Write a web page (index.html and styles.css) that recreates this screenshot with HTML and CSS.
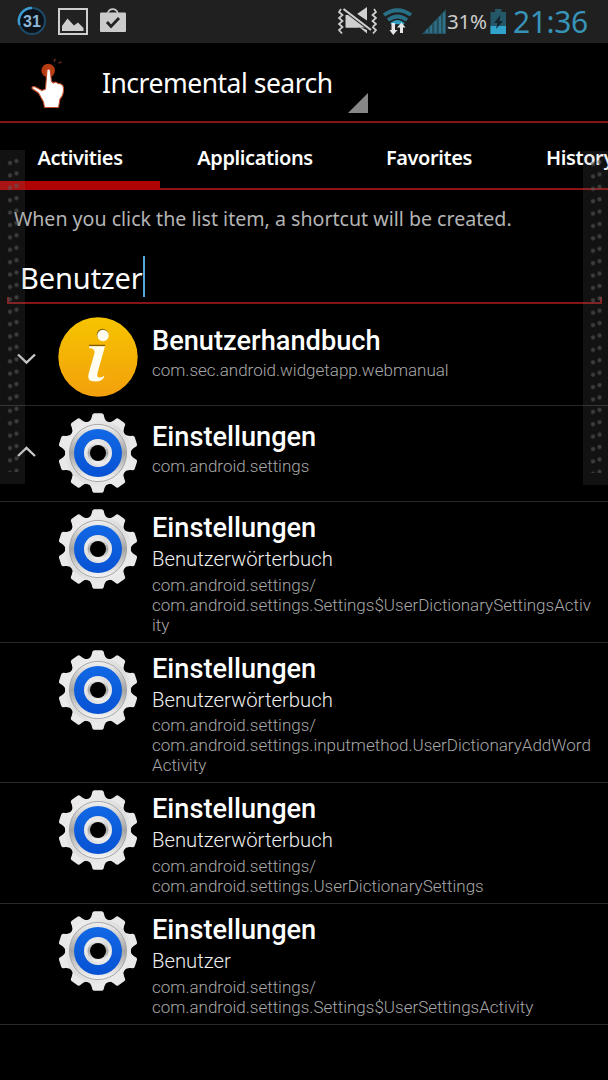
FILE: index.html
```html
<!DOCTYPE html>
<html lang="en">

<head>
    <meta charset="UTF-8">
    <meta name="viewport" content="width=device-width, initial-scale=1.0">
    <link rel="stylesheet" href="styles.css">
    <title>Incremental search</title>
</head>

<body>
    <!-- shared icons -->
    <svg class="defs" width="0" height="0">
        <defs>
            <linearGradient id="metal" x1="0" y1="0" x2="1" y2="1">
                <stop offset="0" stop-color="#f4f4f4" />
                <stop offset="0.5" stop-color="#dcdcdc" />
                <stop offset="1" stop-color="#f2f2f2" />
            </linearGradient>
            <linearGradient id="ring" x1="0" y1="0" x2="0" y2="1">
                <stop offset="0" stop-color="#f2f2f2" />
                <stop offset="0.5" stop-color="#a4a4a4" />
                <stop offset="1" stop-color="#f8f8f8" />
            </linearGradient>
            <linearGradient id="blue" x1="0" y1="0" x2="0" y2="1">
                <stop offset="0" stop-color="#1268e4" />
                <stop offset="1" stop-color="#0752d4" />
            </linearGradient>
            <linearGradient id="yellow" x1="0" y1="0" x2="0" y2="1">
                <stop offset="0" stop-color="#f6c400" />
                <stop offset="1" stop-color="#f3a00c" />
            </linearGradient>
            <path id="tooth" d="M-11 -30 Q-7.2 -32 -6.2 -36 L-5.700 -38.3 Q-5.2 -39.8 -3.500 -39.8 H3.500 Q5.2 -39.8 5.700 -38.3 L6.2 -36 Q7.2 -32 11 -30 Z" />
            <symbol id="gear" viewBox="-40 -40 80 80">
                <g fill="#e9e9e9">
                    <use href="#tooth" />
                    <use href="#tooth" transform="rotate(36)" />
                    <use href="#tooth" transform="rotate(72)" />
                    <use href="#tooth" transform="rotate(108)" />
                    <use href="#tooth" transform="rotate(144)" />
                    <use href="#tooth" transform="rotate(180)" />
                    <use href="#tooth" transform="rotate(216)" />
                    <use href="#tooth" transform="rotate(252)" />
                    <use href="#tooth" transform="rotate(288)" />
                    <use href="#tooth" transform="rotate(324)" />
                </g>
                <circle r="33" fill="url(#metal)" />
                <circle r="28.6" fill="url(#ring)" stroke="#a2a2a2" stroke-width="0.9" />
                <circle r="24" fill="url(#blue)" />
                <circle r="14" fill="url(#metal)" />
                <circle r="10.500" fill="url(#ring)" />
                <circle r="8" fill="#000" />
            </symbol>
        </defs>
    </svg>

    <header class="status">
        <svg class="status-left" width="130" height="43" viewBox="0 0 130 43">
            <circle cx="32" cy="21" r="13" fill="#0c1218" stroke="#1d4a68" stroke-width="2" />
            <path d="M19.500 25A13 13 0 0 1 32 8" fill="none" stroke="#3c9bd2" stroke-width="2.400" />
            <text class="badge" x="32" y="26.500">31</text>
            <rect x="59" y="9" width="28" height="25" fill="#222" stroke="#cfcfcf" stroke-width="2" />
            <path d="M62 31V26L67.500 18.500L74 25.500L78 22.500L83.500 28V31Z" fill="#cfcfcf" />
            <path d="M108 14V12.500A5 5 0 0 1 117.500 12.500V14" fill="none" stroke="#c8c8c8" stroke-width="1.700" />
            <rect x="100" y="12.500" width="26" height="19.500" rx="1" fill="#cbcbcb" />
            <path d="M107 22L111 26.500L119 18" fill="none" stroke="#222" stroke-width="2.800" />
        </svg>
        <div class="status-right">
            <svg width="110" height="43" viewBox="336 0 110 43">
                <path d="M341 9L339 12L342.500 15L339 18L342.500 21L339 24L342.500 27L339 30L342 33.500M374 9L376 12L372.500 15L376 18L372.500 21L376 24L372.500 27L376 30L373 33.500" fill="none" stroke="#cfcfcf" stroke-width="1.700" />
                <path d="M345.500 15H350L366 27.500H345.500ZM367 7V20.500L357 14Z" fill="#cfcfcf" />
                <path d="M344 8L371 28.500" stroke="#202020" stroke-width="6" />
                <path d="M343.500 9L371 30" stroke="#cfcfcf" stroke-width="2.200" />
                <path d="M346 17.500V27.500H359ZM358 26L367 33.500V30Z" fill="#cfcfcf" />
                <g fill="none" stroke="#286f88" stroke-width="3.800">
                    <path d="M384 15Q397.500 5.500 411 15" />
                    <path d="M388 20Q397.500 13 407 20" />
                    <path d="M391.500 24.500Q397.500 19.500 403.500 24.500" stroke="#2d9cbd" />
                </g>
                <path d="M391.500 23H395V30H397.500L393.200 35L389.500 30H391.500ZM400 33V27.500H397L401.500 22.500L405.500 27.500H403V33Z" fill="#e6e6e6" />
                <path d="M422 34L446 9V34Z" fill="#25515f" />
                <path d="M427 33V29.500M431 33V25.500M435.500 33V21M440 33V16.500M444 33V12.500" stroke="#2f7189" stroke-width="2" />
            </svg>
            <span class="percent">31%</span>
            <svg width="18" height="43" viewBox="489 0 18 43">
                <path d="M495 9H501.500V12H506V34H490.500V12H495Z" fill="#245768" />
                <rect x="490.500" y="26" width="15.500" height="8" fill="#31a4cb" />
                <path d="M500.500 15L494 23H497.500L496 29L503 21H499.500Z" fill="#15242a" />
            </svg>
            <span class="clock">21:36</span>
        </div>
    </header>

    <div class="action-bar">
        <svg class="logo" width="40" height="56" viewBox="28 56 40 56">
            <circle cx="48.200" cy="70.500" r="6.800" fill="#b63c12" />
            <path d="M54.500 63L53.500 59.500L56 58.500ZM57 63.500L61 61L61.500 63Z" fill="#6e2c20" />
            <path d="M47 70Q48.500 68 50.200 70L51.500 81.500L53.500 83Q55.500 81 58 83.500Q63 83.500 63.500 88Q64 95 60 99L58.500 107.500H44.500L43.500 102L38.500 93L32 88.500Q31.500 86 35 86.800L42 90.500L45.500 89Z" fill="#fff" stroke="#c44b28" stroke-width="1.100" stroke-linejoin="round" />
        </svg>
        <h1>Incremental search</h1>
        <svg class="corner" width="20" height="20" viewBox="0 0 20 20">
            <path d="M20 0V20H0Z" fill="#878787" />
        </svg>
    </div>

    <nav class="tabs">
        <span class="tab active">Activities</span>
        <span class="tab apps">Applications</span>
        <span class="tab favs">Favorites</span>
        <span class="tab history">History</span>
    </nav>

    <p class="hint">When you click the list item, a shortcut will be created.</p>

    <div class="search">
        <span class="query">Benutzer</span><span class="caret"></span>
    </div>

    <main class="list">
        <div class="row group">
            <svg class="chevron down" width="20" height="12" viewBox="0 0 20 12">
                <path d="M1 1.500L9.500 9.500L18 1.500" />
            </svg>
            <svg class="icon" width="80" height="80" viewBox="0 0 80 80">
                <circle cx="40" cy="40" r="39.700" fill="url(#yellow)" />
                <circle cx="44.500" cy="17.500" r="5.800" fill="#835c00" />
                <circle cx="45" cy="18.500" r="5.700" fill="#fffdf0" />
                <path d="M31 28.500H47" stroke="#835c00" stroke-width="1.500" />
                <path d="M31 29.200H47L39.500 56Q38.500 61 42 60.500Q45 60 46.500 58.500Q45.500 64.500 37 64.500Q28.500 64.500 30.500 57L36.500 36Q37.500 31.500 31 31Z" fill="#fffdf0" />
            </svg>
            <div class="text">
                <h2>Benutzerhandbuch</h2>
                <p class="package">com.sec.android.widgetapp.webmanual</p>
            </div>
        </div>
        <div class="row group">
            <svg class="chevron" width="20" height="12" viewBox="0 0 20 12">
                <path d="M1 10L9.500 2L18 10" />
            </svg>
            <svg class="icon" width="80" height="80"><use href="#gear" /></svg>
            <div class="text">
                <h2>Einstellungen</h2>
                <p class="package">com.android.settings</p>
            </div>
        </div>
        <div class="row child">
            <svg class="icon" width="80" height="80"><use href="#gear" /></svg>
            <div class="text">
                <h2>Einstellungen</h2>
                <p class="label">Benutzerwörterbuch</p>
                <p class="package">com.android.settings/<br>com.android.settings.Settings$UserDictionarySettingsActiv<br>ity</p>
            </div>
        </div>
        <div class="row child">
            <svg class="icon" width="80" height="80"><use href="#gear" /></svg>
            <div class="text">
                <h2>Einstellungen</h2>
                <p class="label">Benutzerwörterbuch</p>
                <p class="package">com.android.settings/<br>com.android.settings.inputmethod.UserDictionaryAddWord<br>Activity</p>
            </div>
        </div>
        <div class="row child">
            <svg class="icon" width="80" height="80"><use href="#gear" /></svg>
            <div class="text">
                <h2>Einstellungen</h2>
                <p class="label">Benutzerwörterbuch</p>
                <p class="package">com.android.settings/<br>com.android.settings.UserDictionarySettings</p>
            </div>
        </div>
        <div class="row child">
            <svg class="icon" width="80" height="80"><use href="#gear" /></svg>
            <div class="text">
                <h2>Einstellungen</h2>
                <p class="label">Benutzer</p>
                <p class="package">com.android.settings/<br>com.android.settings.Settings$UserSettingsActivity</p>
            </div>
        </div>
    </main>

    <!-- edge handles floating over the list -->
    <div class="edge left"><div class="grip"></div></div>
    <div class="edge right"><div class="grip"></div></div>
</body>

</html>
```
FILE: styles.css
```css
* {
    box-sizing: border-box;
}

body {
    margin: 0;
    width: 608px;
    height: 1080px;
    overflow: hidden;
    position: relative;
    background: #000;
    color: #fff;
    font-family: "Noto Sans", "Open Sans", sans-serif;
}

h1,
h2,
p {
    margin: 0;
    font-weight: 400;
    white-space: nowrap;
}

svg {
    display: block;
    flex: none;
}

.defs {
    position: absolute;
}

.status {
    display: flex;
    justify-content: space-between;
    height: 43px;
    background: #202020;
}

.badge {
    font: bold 16px "Liberation Sans", sans-serif;
    fill: #8db8d8;
    text-anchor: middle;
}

.status-right {
    display: flex;
    width: 272px;
}

.percent {
    width: 43px;
    padding-left: 1px;
    font-size: 20.5px;
    line-height: 43px;
    letter-spacing: -0.2px;
    color: #ccc;
}

.clock {
    padding-left: 6px;
    font-size: 30px;
    line-height: 44px;
    letter-spacing: -0.4px;
    color: #3793b7;
}

.action-bar {
    display: flex;
    height: 80px;
    padding: 13px 0 0 28px;
    border-bottom: 2px solid #841416;
}

.action-bar h1 {
    width: 246px;
    padding-left: 34px;
    font-size: 26.5px;
    line-height: 55px;
    letter-spacing: -0.5px;
}

.corner {
    margin: 37px 0 0 34px;
}

.tabs {
    display: flex;
    height: 67px;
    background: linear-gradient(#8c1214, #8c1214) left bottom / 100% 2px no-repeat;
    overflow: hidden;
}

.tab {
    flex: none;
    width: 160px;
    height: 67px;
    font-size: 20px;
    font-weight: 600;
    line-height: 69px;
    letter-spacing: -0.4px;
    text-align: center;
}

.apps {
    width: 190px;
}

.favs {
    width: 158px;
}

.history {
    padding-left: 38px;
    text-align: left;
}

.active {
    border-bottom: 9px solid #b00404;
}

.hint {
    height: 58px;
    padding-left: 14px;
    font-size: 19.6px;
    line-height: 57px;
    color: #b4b4b4;
}

.search {
    display: flex;
    height: 56px;
    margin: 0 6px 6px 7px;
    padding-left: 13px;
    border-bottom: 2px solid #841416;
    background: linear-gradient(#841416, #841416) left bottom / 2px 5px no-repeat,
        linear-gradient(#841416, #841416) right bottom / 2px 5px no-repeat;
}

.query {
    font-size: 29px;
    line-height: 59px;
    letter-spacing: -0.1px;
}

.caret {
    width: 2px;
    height: 41px;
    margin-top: 8px;
    background: #55a8dc;
}

.list {
    font-family: Roboto, sans-serif;
}

.row {
    display: flex;
    padding: 7px 0 0 58px;
    border-bottom: 1px solid #292929;
}

.group {
    height: 96px;
    padding-left: 17px;
}

.child {
    padding-bottom: 7.2px;
}

.chevron {
    width: 20px;
    margin: 33px 21px 0 0;
    fill: none;
    stroke: #c9c9c9;
    stroke-width: 2.4;
}

.down {
    margin-top: 36px;
}

.text {
    padding-left: 14px;
}

.group .text {
    padding-top: 7px;
}

.child .text {
    padding-top: 2px;
}

.text h2 {
    font-size: 27.2px;
    font-weight: 500;
    line-height: 34px;
}

.label {
    font-size: 20.3px;
    font-weight: 300;
    line-height: 29.5px;
    color: #eee;
}

.package {
    font-size: 17px;
    font-weight: 300;
    line-height: 20px;
    color: #a8a8a8;
}

.group .package {
    line-height: 24px;
}

.edge {
    position: absolute;
    top: 150px;
    width: 25px;
    height: 334px;
    padding: 8px 0 0 6px;
    background: rgba(130, 130, 130, 0.14);
}

.left {
    left: 0;
}

.right {
    right: 0;
    top: 151px;
}

.grip {
    width: 15px;
    height: 314px;
    background: radial-gradient(circle at 4px 5px, rgba(90, 90, 90, 0.6) 1.3px, transparent 2.8px) 0 0 / 15px 12.4px,
        radial-gradient(circle at 10.5px 3px, rgba(90, 90, 90, 0.6) 1.3px, transparent 2.8px) 0 0 / 15px 12.4px;
}
```
